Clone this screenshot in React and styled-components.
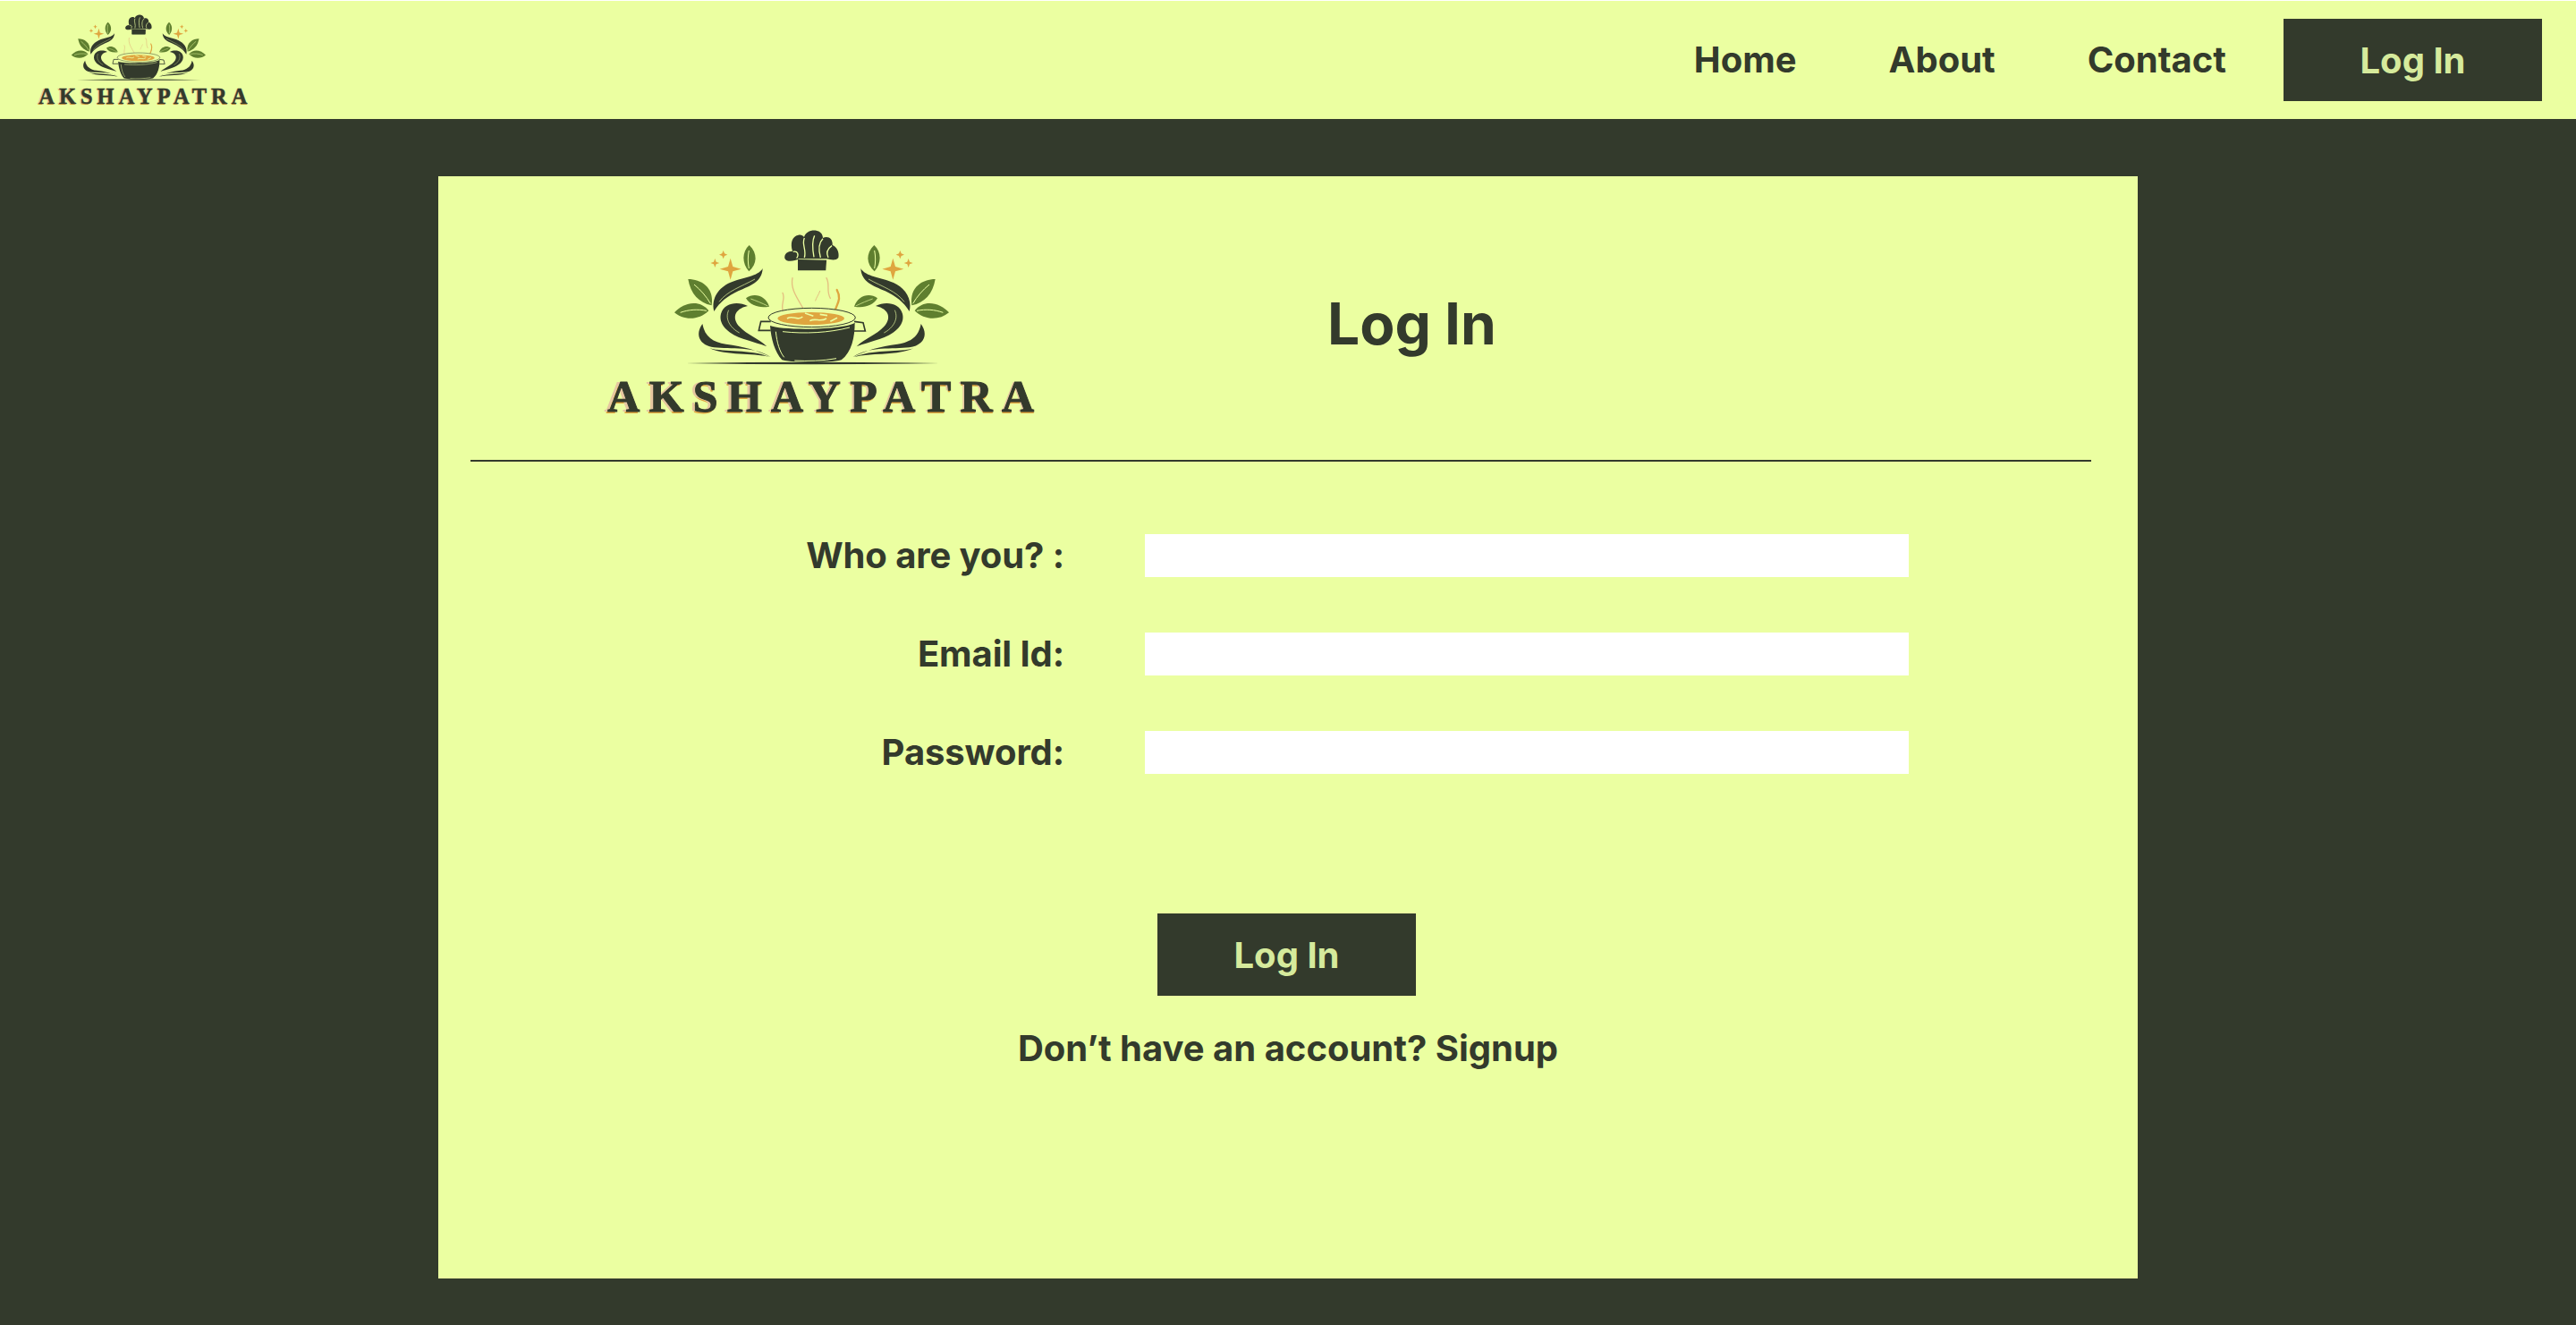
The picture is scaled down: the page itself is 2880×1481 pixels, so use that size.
import React from "react";
import styled, { createGlobalStyle } from "styled-components";

const DARK = "#333a2c";
const LIME = "#ebffa1";
const LEAF = "#5f7f2f";
const GOLD = "#dfa53f";

const GlobalStyle = createGlobalStyle`
  * { box-sizing: border-box; }
  html, body { margin: 0; padding: 0; background: #ffffff; }
  body {
    font-family: Inter, "Liberation Sans", sans-serif;
    font-feature-settings: "calt" 0;
    color: ${DARK};
  }
`;

// half of the emblem, the other half is the same group mirrored
const EmblemSide = () => (
  <g>
    <path fill={LEAF} d="M233 72 C208 95 208 132 232 160 C260 135 262 100 233 72Z" />
    <path fill="none" stroke={LIME} strokeWidth="3" d="M232 90 C228 110 228 130 232 150" />
    <path fill={LEAF} d="M28 186 C70 186 116 212 107 274 C64 265 36 235 28 186Z" />
    <path fill="none" stroke={LIME} strokeWidth="3" d="M48 204 C70 222 90 245 103 268" />
    <path fill={LEAF} d="M-18 298 C15 262 68 254 97 292 C65 324 15 326 -18 298Z" />
    <path fill="none" stroke={LIME} strokeWidth="3" d="M2 298 C30 288 60 286 90 292" />
    <path fill={LEAF} d="M222 250 C250 230 288 242 300 278 C268 284 238 276 222 250Z" />
    <path fill="none" stroke={LIME} strokeWidth="2" d="M238 252 C255 258 275 266 295 276" />
    <path fill={GOLD} d="M170 116 L178 144 L206 152 L178 160 L170 188 L162 160 L134 152 L162 144Z" />
    <path fill={GOLD} d="M146 90 L150 100 L160 104 L150 108 L146 118 L142 108 L132 104 L142 100Z" />
    <path fill={GOLD} d="M118 117 L122 128 L133 132 L122 136 L118 147 L114 136 L103 132 L114 128Z" />
    <path fill={DARK} d="M278 150 C276 196 236 208 196 226 C160 244 134 262 115 294 C104 250 132 214 168 198 C210 180 262 178 278 150Z" />
    <path fill="none" stroke={LIME} strokeWidth="2" d="M132 262 C160 225 205 212 252 186" />
    <path fill={DARK} d="M228 276 C196 260 150 264 138 302 C128 342 170 372 215 387 C245 397 272 404 292 412 C264 384 226 374 200 345 C176 320 180 286 228 276Z" />
    <path fill="none" stroke={LIME} strokeWidth="2" d="M164 290 C150 320 170 350 200 366" />
    <path fill={DARK} d="M76 336 C50 372 66 408 115 415 C170 422 250 410 305 448 C262 424 212 412 155 404 C112 398 84 380 76 336Z" />
    <path fill={DARK} d="M100 418 C150 432 235 420 300 447 C240 432 160 444 100 418Z" />
  </g>
);

const Logo = ({ width }) => (
  <LogoSvg $width={width} viewBox="0 0 1680 720" role="img" aria-label="Akshaypatra">
    <g transform="translate(360 30)">
      <EmblemSide />
      <g transform="translate(885 0) scale(-1 1)">
        <EmblemSide />
      </g>
      {/* chef hat */}
      <path fill={DARK} d="M352 116 C350 100 362 92 378 92 C370 66 376 42 398 38 C407 36 413 40 417 45 C422 28 440 20 458 23 C472 25 480 36 480 48 C497 40 514 50 512 72 C526 76 536 96 532 114 C522 126 506 120 492 118 L400 118 C384 126 358 130 352 116Z" />
      <path fill="none" stroke={LIME} strokeWidth="4" d="M380 94 C396 90 400 104 392 116 M418 48 C408 70 426 88 418 114 M452 40 C442 60 446 90 450 112 M480 50 C462 68 466 92 472 114 M510 74 C496 84 490 98 498 114" />
      <path fill={DARK} stroke={DARK} strokeWidth="4" d="M398 122 L490 124 L488 155 L398 155Z" />
      {/* steam */}
      <g fill="none" strokeLinecap="round">
        <path stroke="#e4bf80" strokeWidth="4" d="M378 182 C370 220 395 250 420 295" />
        <path stroke="#e4bf80" strokeWidth="4" d="M345 232 C356 255 335 270 348 300" />
        <path stroke="#e4bf80" strokeWidth="4" d="M492 182 C505 205 490 225 505 250" />
        <path stroke="#e4bf80" strokeWidth="3" d="M470 226 C465 240 458 248 455 258" />
        <path stroke={GOLD} strokeWidth="7" d="M527 222 C545 255 525 270 518 300" />
      </g>
      {/* pot */}
      <path fill="none" stroke={DARK} strokeWidth="5" d="M305 328 L272 328 L265 358 L305 358 M585 328 L615 332 L622 360 L585 360" />
      <ellipse cx="443" cy="315" rx="146" ry="32" fill={LIME} stroke={DARK} strokeWidth="3" />
      <ellipse cx="440" cy="318" rx="112" ry="21" fill={GOLD} />
      <path fill="none" stroke={LIME} strokeWidth="5" d="M360 318 C380 305 395 328 412 312 M436 326 C455 314 470 332 492 318 M420 300 L448 310 M505 328 L528 316 M470 304 L495 308" />
      <path fill={DARK} d="M303 342 C340 358 545 358 587 332 C587 380 577 430 542 457 C500 468 390 468 343 457 C318 430 306 385 303 342Z" />
      <path fill="none" stroke={LIME} strokeWidth="3" d="M322 362 C326 400 335 430 350 448 M345 362 C420 370 500 366 570 348 M385 459 C430 462 480 460 525 452" />
      <path fill={DARK} d="M20 468 Q440 460 870 468 Q440 476 20 468Z" />
    </g>
    <LogoText x="112" y="667" textLength="1436" lengthAdjust="spacing" fill={GOLD}>AKSHAYPATRA</LogoText>
    <LogoText x="106" y="660" textLength="1436" lengthAdjust="spacing" fill="#e6c7a0">AKSHAYPATRA</LogoText>
    <LogoDark x="118" y="660" textLength="1430" lengthAdjust="spacing">AKSHAYPATRA</LogoDark>
  </LogoSvg>
);

export default function App() {
  return (
    <>
      <GlobalStyle />
      <Page>
        <NavBar>
          <Logo width={274} />
          <NavLinks>
            <NavLink>Home</NavLink>
            <NavLink>About</NavLink>
            <NavLink>Contact</NavLink>
          </NavLinks>
          <NavButton>Log In</NavButton>
        </NavBar>
        <Main>
          <Card>
            <CardHeader>
              <Logo width={560} />
              <Title>Log In</Title>
            </CardHeader>
            <Divider />
            <Form>
              <Label>Who are you? :</Label>
              <Input type="text" />
              <Label>Email Id:</Label>
              <Input type="email" />
              <Label>Password:</Label>
              <Input type="password" />
            </Form>
            <Actions>
              <SubmitButton>Log In</SubmitButton>
              <Hint>Don’t have an account? Signup</Hint>
            </Actions>
          </Card>
        </Main>
      </Page>
    </>
  );
}

const Page = styled.div`
  width: 2880px;
  height: 1481px;
  padding-top: 1px;
  display: flex;
  flex-direction: column;
  overflow: hidden;
`;

const NavBar = styled.header`
  height: 132px;
  flex: none;
  padding: 0 38px 0 24px;
  background: ${LIME};
  display: flex;
  align-items: center;
`;

const LogoSvg = styled.svg`
  width: ${(p) => p.$width}px;
  flex: none;
  display: block;
`;

const LogoText = styled.text`
  font-family: "Liberation Serif", serif;
  font-weight: 700;
  font-size: 150px;
`;

const LogoDark = styled(LogoText)`
  fill: ${DARK};
  stroke: ${DARK};
  stroke-width: 3px;
`;

const NavLinks = styled.nav`
  margin-left: auto;
  display: flex;
  gap: 103px;
`;

const NavLink = styled.a`
  font-size: 40px;
  font-weight: 700;
  line-height: 50px;
  color: ${DARK};
  cursor: pointer;
`;

const DarkButton = styled.button`
  width: 289px;
  height: 92px;
  border: 0;
  padding: 0;
  background: ${DARK};
  color: #d6ea9c;
  font-family: inherit;
  font-size: 40px;
  font-weight: 700;
  cursor: pointer;
`;

const NavButton = styled(DarkButton)`
  margin-left: 64px;
`;

const Main = styled.main`
  flex: 1;
  background: ${DARK};
  padding-top: 64px;
  display: flex;
  justify-content: center;
`;

const Card = styled.section`
  width: 1900px;
  height: 1232px;
  background: ${LIME};
  padding-top: 43px;
  display: flex;
  flex-direction: column;
`;

const CardHeader = styled.div`
  padding-left: 150px;
  display: flex;
  align-items: center;
`;

const Title = styled.h1`
  margin: 3px 0 0 284px;
  font-size: 64px;
  font-weight: 700;
  line-height: 78px;
`;

const Divider = styled.hr`
  width: 1812px;
  height: 2px;
  margin: 34px 0 0 36px;
  border: 0;
  background: ${DARK};
`;

const Form = styled.form`
  margin-top: 81px;
  display: grid;
  grid-template-columns: 700px 854px;
  column-gap: 90px;
  row-gap: 62px;
  align-items: center;
`;

const Label = styled.label`
  text-align: right;
  font-size: 40px;
  font-weight: 700;
  line-height: 48px;
  letter-spacing: -0.1px;
`;

const Input = styled.input`
  height: 48px;
  width: 100%;
  border: 0;
  padding: 0 12px;
  background: #ffffff;
`;

const Actions = styled.div`
  margin-top: 156px;
  display: flex;
  flex-direction: column;
  align-items: center;
`;

const SubmitButton = styled(DarkButton)`
  margin-right: 3px;
`;

const Hint = styled.p`
  margin: 35px 0 0;
  font-size: 40px;
  font-weight: 700;
  line-height: 48px;
`;
